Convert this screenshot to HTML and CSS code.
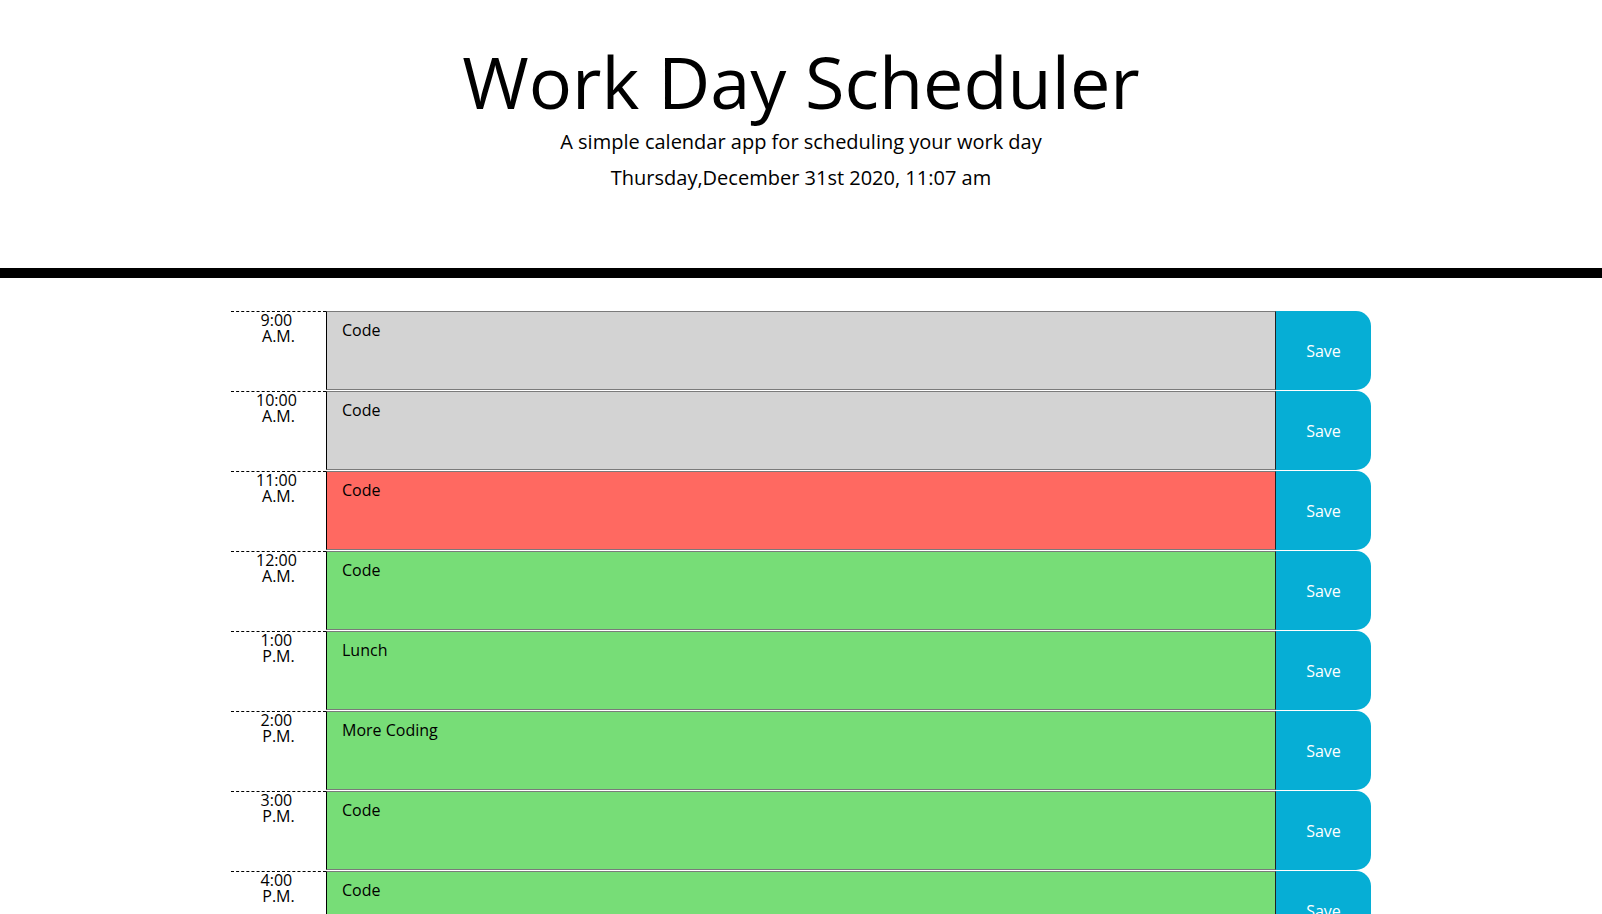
FILE: index.html
```html
<!DOCTYPE html>
<html lang="en">
<head>
<meta charset="UTF-8" />
<meta name="viewport" content="width=device-width, initial-scale=1" />
<title>Work Day Scheduler</title>
<link rel="stylesheet" href="styles.css">
</head>
<body>

<header class="jumbotron">
  <h1 class="display-3">Work Day Scheduler</h1>
  <p class="lead">A simple calendar app for scheduling your work day</p>
  <p class="lead" id="currentDay">Thursday,December 31st 2020, 11:07 am</p>
</header>

<div class="container">
  <div class="row time-block">
    <div class="hour">9:00&nbsp;<br>A.M.</div>
    <textarea class="description past">Code</textarea>
    <button class="saveBtn">Save</button>
  </div>
  <div class="row time-block">
    <div class="hour">10:00&nbsp;<br>A.M.</div>
    <textarea class="description past">Code</textarea>
    <button class="saveBtn">Save</button>
  </div>
  <div class="row time-block">
    <div class="hour">11:00&nbsp;<br>A.M.</div>
    <textarea class="description present">Code</textarea>
    <button class="saveBtn">Save</button>
  </div>
  <div class="row time-block">
    <div class="hour">12:00&nbsp;<br>A.M.</div>
    <textarea class="description future">Code</textarea>
    <button class="saveBtn">Save</button>
  </div>
  <div class="row time-block">
    <div class="hour">1:00&nbsp;<br>P.M.</div>
    <textarea class="description future">Lunch</textarea>
    <button class="saveBtn">Save</button>
  </div>
  <div class="row time-block">
    <div class="hour">2:00&nbsp;<br>P.M.</div>
    <textarea class="description future">More Coding</textarea>
    <button class="saveBtn">Save</button>
  </div>
  <div class="row time-block">
    <div class="hour">3:00&nbsp;<br>P.M.</div>
    <textarea class="description future">Code</textarea>
    <button class="saveBtn">Save</button>
  </div>
  <div class="row time-block">
    <div class="hour">4:00&nbsp;<br>P.M.</div>
    <textarea class="description future">Code</textarea>
    <button class="saveBtn">Save</button>
  </div>
  <div class="row time-block">
    <div class="hour">5:00&nbsp;<br>P.M.</div>
    <textarea class="description future"></textarea>
    <button class="saveBtn">Save</button>
  </div>
</div>

</body>
</html>
```

FILE: styles.css
```css
body {
  font-family: "Open Sans", sans-serif;
  font-size: 16px;
  line-height: 1;
  color: #000;
  margin: 0;
}
.jumbotron {
  text-align: center;
  padding: 38px 32px 64px;
  margin-bottom: 32px;
  border-bottom: 10px solid black;
}
.display-3 {
  font-size: 72px;
  font-weight: 400;
  line-height: 1.2;
  margin: 0 0 8px;
}
.lead {
  font-size: 20px;
  margin: 0 0 16px;
}
.container {
  width: 1140px;
  margin: 0 auto;
}
.row {
  display: flex;
  height: 80px;
  border-top: 1px solid white;
  box-sizing: border-box;
}
.hour {
  width: 95px;
  flex: none;
  box-sizing: border-box;
  padding: 0 15px;
  text-align: center;
  border-top: 1px dashed #000;
}
textarea {
  width: 950px;
  flex: none;
  box-sizing: border-box;
  font: inherit;
  line-height: 1;
  color: #000;
  padding: 10px 15px;
  resize: none;
  border: 1px solid #7a7a7a;
  border-left-color: #000;
  border-right-color: #222;
  margin: 0;
}
.past {
  background-color: #d3d3d3;
}
.present {
  background-color: #ff6961;
}
.future {
  background-color: #77dd77;
}
.saveBtn {
  width: 95px;
  flex: none;
  border: none;
  margin: 0;
  font: inherit;
  color: white;
  background-color: #06aed5;
  border-top-right-radius: 15px;
  border-bottom-right-radius: 15px;
  cursor: pointer;
}
```
